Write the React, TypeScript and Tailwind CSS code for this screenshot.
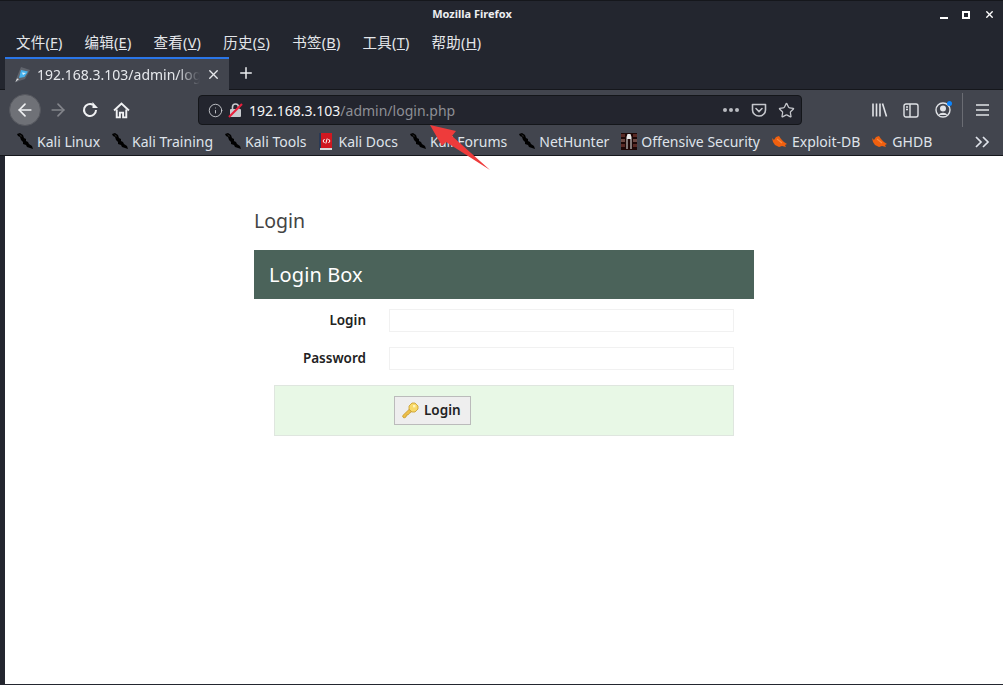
import React from "react";
import { ArrowLeft, ArrowRight, Info, Star, X, Plus } from "lucide-react";

const ui = "font-['Noto_Sans','Noto_Sans_CJK_SC',sans-serif]";

function Dragon() {
  return (
    <svg width="16" height="17" viewBox="0 0 16 17" className="shrink-0">
      <path d="M0 1 L3 0 L6 2 L7 5 L9 6 L9 8 L11 9 L12 11 L15 13 L16 16 L13 15 L10 14 L9 12 L6 11 L6 9 L4 7 L3 4 L1 3 Z" fill="#000" />
      <path d="M2 1 L5 3 L4 4 Z" fill="#2a2a2a" />
    </svg>
  );
}

function Bug() {
  return (
    <svg width="16" height="14" viewBox="0 0 16 14" className="shrink-0">
      <path d="M0 3 L2 5 L4 2 L7 1 L9 4 L12 7 L15 9 L13 10 L14 12 L10 11 L7 12 L3 10 L1 7 Z" fill="#f0600f" />
      <path d="M5 4 L10 8" stroke="#f98a45" strokeWidth="1.2" />
    </svg>
  );
}

function Docs() {
  return (
    <svg width="16" height="17" viewBox="0 0 16 17" className="shrink-0">
      <rect x="1" y="0" width="13" height="17" fill="#d01820" />
      <rect x="1" y="0" width="2" height="17" fill="#2a3a55" />
      <rect x="2" y="15" width="12" height="2" fill="#d9d9d9" />
      <path d="M6.5 6 L5 8 L6.5 10 M10.5 6 L12 8 L10.5 10 M9.2 5.5 L7.8 10.5" stroke="#fff" strokeWidth="1" fill="none" />
    </svg>
  );
}

function Offsec() {
  return (
    <svg width="16" height="17" viewBox="0 0 16 17" className="shrink-0">
      <rect width="16" height="17" fill="#1d0807" />
      <rect x="0" y="1" width="4" height="3" fill="#5a2a25" />
      <rect x="0" y="6" width="4" height="3" fill="#6d4a44" />
      <rect x="0" y="11" width="4" height="3" fill="#5a2a25" />
      <rect x="12" y="1" width="4" height="3" fill="#5a2a25" />
      <rect x="12" y="6" width="4" height="3" fill="#6d4a44" />
      <rect x="12" y="11" width="4" height="3" fill="#5a2a25" />
      <path d="M6.5 1 H9.5 L10.5 4 V16 H9.5 V6 H6.5 V16 H5.5 V4 Z" fill="#e8e8e8" />
    </svg>
  );
}

function Bookmark({ icon, label }: { icon: React.ReactNode; label: string }) {
  return (
    <div className="flex items-center gap-[4px] shrink-0">
      {icon}
      <span className="text-[14px] leading-none text-[#dfe3ea]">{label}</span>
    </div>
  );
}

function Menu({ zh, k }: { zh: string; k: string }) {
  return (
    <span className="text-[14.5px] tracking-[0.25px] text-[#e4e6ea]">
      {zh}(<u>{k}</u>)
    </span>
  );
}

function Key() {
  return (
    <svg width="17" height="17" viewBox="0 0 17 17" className="shrink-0">
      <path d="M0.8 13.5 L7 7.5 L9.5 10 L7 11.5 L6 13 L4.5 13 L4 15 L2 16 L0.8 15 Z" fill="#eec04a" stroke="#c79a2a" strokeWidth="0.8" strokeLinejoin="round" />
      <path d="M7 4 L10 1 L13 1 L16 4 L16 7 L13 10 L10 10 L7 7 Z" fill="#f8d968" stroke="#c79a2a" strokeWidth="0.8" strokeLinejoin="round" />
      <rect x="11" y="3" width="2.4" height="2.4" fill="#fff3b8" />
    </svg>
  );
}

export default function App() {
  return (
    <div className={`${ui} relative w-[1003px] h-[685px] overflow-hidden bg-[#23262f] flex flex-col`}>
      {/* title bar */}
      <div className="relative h-[28px] shrink-0 flex items-center justify-center border-t border-[#15171c]">
        <span className="text-[11px] font-bold text-[#eceef1] ml-[-59px]">Mozilla Firefox</span>
        <div className="absolute right-[8px] top-[8px] flex items-center gap-[14px]">
          <div className="w-[8px] h-[9px] border-b-2 border-white" />
          <div className="w-[8px] h-[8px] border-2 border-white" />
          <X size={11} strokeWidth={3} className="text-white" />
        </div>
      </div>
      {/* menu bar */}
      <div className="h-[29px] shrink-0 flex items-center gap-[22px] pl-[16px]">
        <Menu zh="文件" k="F" />
        <Menu zh="编辑" k="E" />
        <Menu zh="查看" k="V" />
        <Menu zh="历史" k="S" />
        <Menu zh="书签" k="B" />
        <Menu zh="工具" k="T" />
        <Menu zh="帮助" k="H" />
      </div>
      {/* tabs */}
      <div className="h-[33px] shrink-0 flex pl-[5px] border-b border-[#15171c]">
        <div className="w-[224px] h-[33px] bg-[#42454e] border-t-2 border-[#2a76e8] flex items-center pl-[9px] pr-[8px] gap-[6px] relative z-10">
          <svg width="17" height="17" viewBox="0 0 17 17" className="shrink-0">
            <path d="M7 1 L16 4 L11 13 L5 15 L1 16.5 L2.5 12 Z" fill="#60646c" />
            <path d="M7 4 L14 5.5 L10.5 11 L5 12 Z" fill="#46b0ea" />
            <path d="M8 6.5 L12 7 L9 9 Z" fill="#d9f0fb" />
            <path d="M1.5 16 L5 13 L3 12.5 Z" fill="#e8e8e8" />
          </svg>
          <span className="text-[14px] leading-[20px] text-[#e6e8ec] whitespace-nowrap overflow-hidden w-[164px] [mask-image:linear-gradient(to_right,black_86%,transparent)]">
            192.168.3.103/admin/login.php
          </span>
          <X size={15} strokeWidth={2.2} className="text-[#e6e8ec] shrink-0 ml-auto" />
        </div>
        <div className="w-[34px] flex items-center justify-center">
          <Plus size={18} strokeWidth={2} className="text-[#eceef1]" />
        </div>
      </div>
      {/* nav bar */}
      <div className="h-[37px] shrink-0 bg-[#42454e] flex items-center pl-[9px] pt-[3px] relative">
        <div className="w-[32px] h-[32px] rounded-full bg-[#6f7177] border border-[#55575e] flex items-center justify-center">
          <ArrowLeft size={20} strokeWidth={2} className="text-[#f0f1f3]" />
        </div>
        <ArrowRight size={20} strokeWidth={2} className="text-[#83858b] ml-[7px]" />
        <svg width="16" height="16" viewBox="0 0 16 16" className="ml-[14px]" fill="none" stroke="#f0f1f3" strokeWidth="2">
          <path d="M14 8 A6 6 0 1 1 11 2.8" />
          <path d="M10.5 0 V6 H16 Z" fill="#f0f1f3" stroke="none" />
        </svg>
        <svg width="17" height="17" viewBox="0 0 16 16" className="ml-[15px]" fill="none" stroke="#f0f1f3" strokeWidth="1.8">
          <path d="M1 8 L8 1.5 L15 8" />
          <path d="M3.5 7 V14.5 H6.5 V10 H9.5 V14.5 H12.5 V7" />
        </svg>
        <div className="ml-[68px] w-[604px] h-[30px] bg-[#23252e] border border-[#14161a] rounded-[4px] flex items-center pl-[9px] pr-[6px] shrink-0">
          <Info size={15} strokeWidth={1.5} className="text-[#c4c6cb] shrink-0" />
          <svg width="16" height="16" viewBox="0 0 16 16" className="ml-[5px] shrink-0">
            <rect x="2" y="7" width="11" height="8" rx="1" fill="#c8cace" />
            <path d="M4.5 7 V5 A3 3 0 0 1 10.5 5 V7" fill="none" stroke="#c8cace" strokeWidth="1.6" />
            <path d="M1 15 L14 2" stroke="#e8203c" strokeWidth="2.2" />
          </svg>
          <span className="ml-[5px] text-[14px] whitespace-nowrap text-[#f3f4f6]">
            192.168.3.103<span className="text-[#8d8f95]">/admin/login.php</span>
          </span>
          <div className="ml-auto flex items-center">
            <div className="flex gap-[2px]">
              <div className="w-[4px] h-[4px] rounded-full bg-[#b9bbc0]" />
              <div className="w-[4px] h-[4px] rounded-full bg-[#b9bbc0]" />
              <div className="w-[4px] h-[4px] rounded-full bg-[#b9bbc0]" />
            </div>
            <svg width="16" height="16" viewBox="0 0 16 16" className="ml-[12px]" fill="none" stroke="#c4c6cb" strokeWidth="1.6">
              <path d="M1.5 2.5 H14.5 V8 A6.5 6 0 0 1 1.5 8 Z" strokeLinejoin="round" />
              <path d="M5 6.5 L8 9.5 L11 6.5" strokeLinecap="round" />
            </svg>
            <Star size={17} strokeWidth={1.8} className="text-[#c4c6cb] ml-[11px]" />
          </div>
        </div>
        <svg width="17" height="16" viewBox="0 0 17 16" className="ml-[69px]" fill="none" stroke="#e0e2e6" strokeWidth="1.6">
          <path d="M2 1.5 V14.5 M5.5 1.5 V14.5 M9 1.5 V14.5 M11.5 1.5 L15.5 14.5" />
        </svg>
        <svg width="16" height="15" viewBox="0 0 16 15" className="ml-[15px]" fill="none" stroke="#e0e2e6" strokeWidth="1.4">
          <rect x="1" y="1" width="14" height="13" rx="2" />
          <path d="M7 1 V14" />
          <path d="M3 4 H5 M3 6.5 H5" />
        </svg>
        <div className="relative ml-[16px] w-[16px] h-[16px]">
          <svg width="16" height="16" viewBox="0 0 16 16" fill="none">
            <circle cx="8" cy="8" r="7" stroke="#e0e2e6" strokeWidth="1.4" />
            <circle cx="8" cy="6.5" r="3" fill="#e0e2e6" />
            <path d="M3.5 13 A5 4 0 0 1 12.5 13" fill="#e0e2e6" />
          </svg>
          <div className="absolute -top-[1px] -right-[1px] w-[5px] h-[5px] rounded-full bg-[#0a84ff]" />
        </div>
        <div className="ml-[11px] w-px h-[34px] bg-[#6a6c73]" />
        <svg width="13" height="12" viewBox="0 0 13 12" className="ml-[13px]" fill="none" stroke="#e0e2e6" strokeWidth="1.6">
          <path d="M0 1 H13 M0 6 H13 M0 11 H13" />
        </svg>
      </div>
      {/* bookmarks */}
      <div className="h-[29px] shrink-0 bg-[#42454e] flex items-center pl-[17px] pt-[1px] border-b border-[#15171c] relative">
        <div className="flex items-center gap-[12px]">
          <Bookmark icon={<Dragon />} label="Kali Linux" />
          <Bookmark icon={<Dragon />} label="Kali Training" />
          <Bookmark icon={<Dragon />} label="Kali Tools" />
          <Bookmark icon={<Docs />} label="Kali Docs" />
          <Bookmark icon={<Dragon />} label="Kali Forums" />
          <Bookmark icon={<Dragon />} label="NetHunter" />
          <Bookmark icon={<Offsec />} label="Offensive Security" />
          <Bookmark icon={<Bug />} label="Exploit-DB" />
          <Bookmark icon={<Bug />} label="GHDB" />
        </div>
        <span className="ml-auto mr-[13px] flex">
          <svg width="15" height="12" viewBox="0 0 15 12" fill="none" stroke="#dfe3ea" strokeWidth="1.7">
            <path d="M1 1 L6 6 L1 11 M8 1 L13 6 L8 11" />
          </svg>
        </span>
      </div>
      {/* page */}
      <div className="flex-1 ml-[5px] mb-px bg-white flex justify-center min-h-0">
        <div className="w-[500px] font-['Noto_Sans',sans-serif]">
          <h1 className="mt-[50px] h-[30px] text-[19.5px] leading-[30px] font-normal text-[#444]">Login</h1>
          <div className="mt-[14px] h-[49px] bg-[#4b635a] flex items-center pl-[15px] text-[20px] tracking-[0.1px] text-white">
            Login Box
          </div>
          <div className="mt-[10px] flex items-center h-[23px]">
            <label className="w-[112px] text-right text-[13.5px] font-semibold text-[#222]">Login</label>
            <div className="ml-[23px] w-[345px] h-[23px] border border-[#f1f1f1] bg-white" />
          </div>
          <div className="mt-[15px] flex items-center h-[23px]">
            <label className="w-[112px] text-right text-[13.5px] font-semibold text-[#222]">Password</label>
            <div className="ml-[23px] w-[345px] h-[23px] border border-[#f1f1f1] bg-white" />
          </div>
          <div className="mt-[15px] ml-[20px] w-[460px] h-[51px] bg-[#e8f8e6] border border-[#dfe6df] flex items-center pl-[119px]">
            <button className="w-[77px] h-[29px] bg-[#eeeeee] border border-[#bbbbbb] flex items-center pl-[7px] gap-[5px] text-[13.5px] font-semibold text-[#222]">
              <Key />
              Login
            </button>
          </div>
        </div>
      </div>
      {/* annotation arrow */}
      <svg className="absolute left-[425px] top-[120px]" width="70" height="55" viewBox="0 0 70 55">
        <path d="M5 5 L31 11 L27 16 L65 50 L21 22 L17 26 Z" fill="#ee3b3b" />
      </svg>
    </div>
  );
}
